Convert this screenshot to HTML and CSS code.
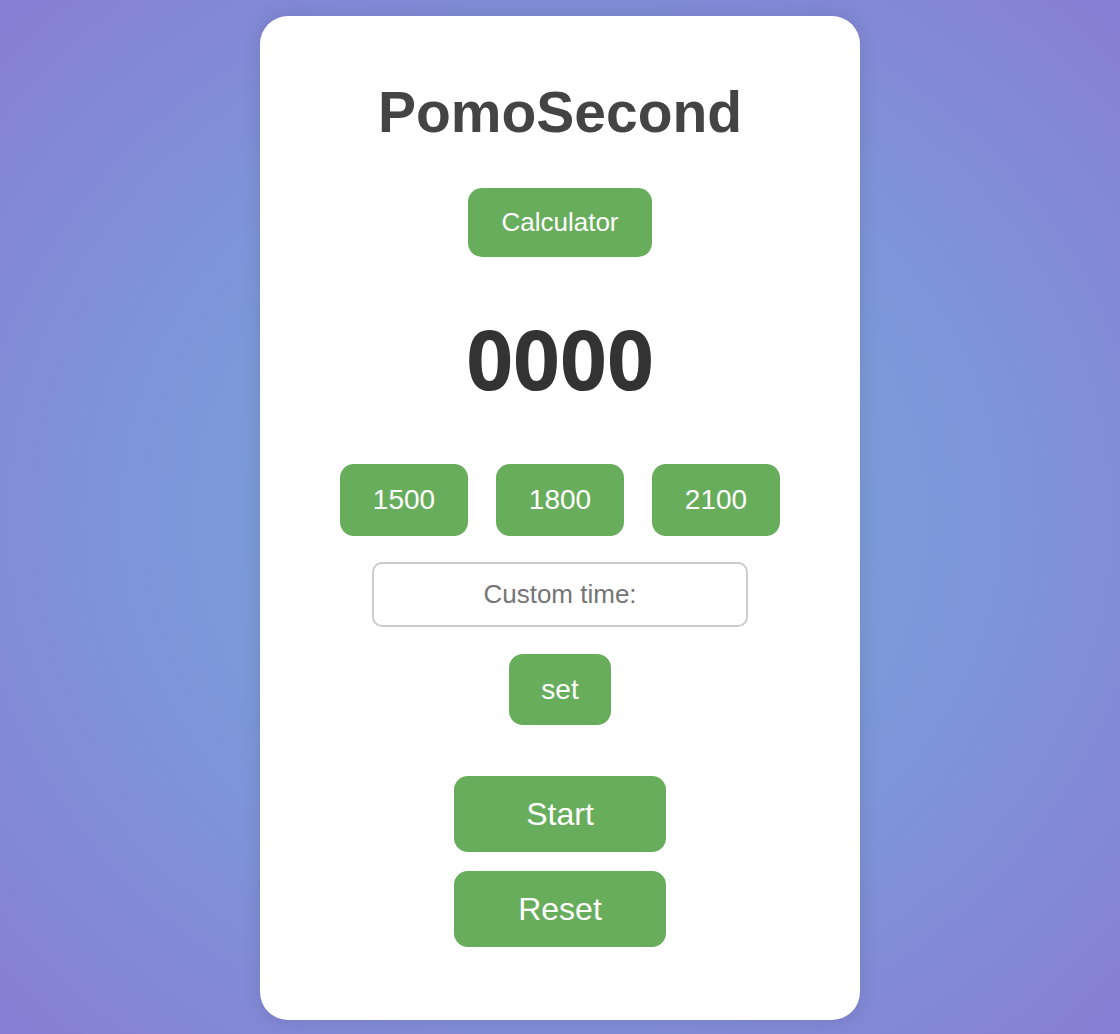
FILE: index.html
```html
<!DOCTYPE html>
<html lang="en">
<head>
<meta charset="utf-8">
<title>PomoSecond</title>
<link rel="stylesheet" href="styles.css">
</head>
<body>
  <main class="card">
    <h1 class="title">PomoSecond</h1>
    <button class="btn btn-calc" type="button">Calculator</button>
    <div class="timer">0000</div>
    <div class="presets">
      <button class="btn btn-preset" type="button">1500</button>
      <button class="btn btn-preset" type="button">1800</button>
      <button class="btn btn-preset" type="button">2100</button>
    </div>
    <input class="custom" type="text" placeholder="Custom time:">
    <button class="btn btn-set" type="button">set</button>
    <div class="controls">
      <button class="btn btn-big" type="button">Start</button>
      <button class="btn btn-big" type="button">Reset</button>
    </div>
  </main>
</body>
</html>
```

FILE: styles.css
```css
html, body {
  margin: 0;
  height: 100%;
}

body {
  min-height: 1034px;
  box-sizing: border-box;
  padding: 16px 0 14px;
  display: flex;
  justify-content: center;
  align-items: flex-start;
  font-family: "Liberation Sans", Arial, sans-serif;
  background: radial-gradient(ellipse 72% 72% at 50% 50%, #77a7dc 0%, #7d97d9 50%, #887dd5 100%);
}

.card {
  width: 600px;
  box-sizing: border-box;
  background: #ffffff;
  border-radius: 28px;
  padding: 63px 0 73px;
  display: flex;
  flex-direction: column;
  align-items: center;
  box-shadow: 0 0 20px rgba(0, 0, 0, 0.12);
}

.title {
  margin: 0;
  font-size: 57px;
  line-height: 66px;
  font-weight: 700;
  color: #444444;
}

.btn {
  border: none;
  background: #68ad5c;
  color: #ffffff;
  font-family: "Liberation Sans", Arial, sans-serif;
  border-radius: 14px;
  cursor: pointer;
  box-sizing: border-box;
}

.btn-calc {
  margin-top: 43px;
  font-size: 26px;
  line-height: 29px;
  padding: 20px 33px;
}

.timer {
  margin-top: 51px;
  font-family: "Open Sans", "DejaVu Sans", sans-serif;
  font-weight: 700;
  font-size: 82px;
  line-height: 100px;
  color: #333333;
}

.presets {
  margin-top: 56px;
  display: flex;
  gap: 28px;
}

.btn-preset {
  width: 128px;
  font-size: 28px;
  line-height: 32px;
  padding: 20px 0;
}

.custom {
  margin-top: 26px;
  width: 376px;
  height: 65px;
  box-sizing: border-box;
  border: 2px solid #cccccc;
  border-radius: 10px;
  font-family: "Liberation Sans", Arial, sans-serif;
  font-size: 26px;
  text-align: center;
  color: #333333;
  outline: none;
  padding: 0 12px;
}

.custom::placeholder {
  color: #757575;
}

.btn-set {
  margin-top: 27px;
  width: 102px;
  font-size: 28px;
  line-height: 31px;
  padding: 20px 0;
}

.controls {
  margin-top: 51px;
  display: flex;
  flex-direction: column;
  gap: 19px;
}

.btn-big {
  width: 212px;
  font-size: 32px;
  line-height: 36px;
  padding: 20px 0;
}
```
